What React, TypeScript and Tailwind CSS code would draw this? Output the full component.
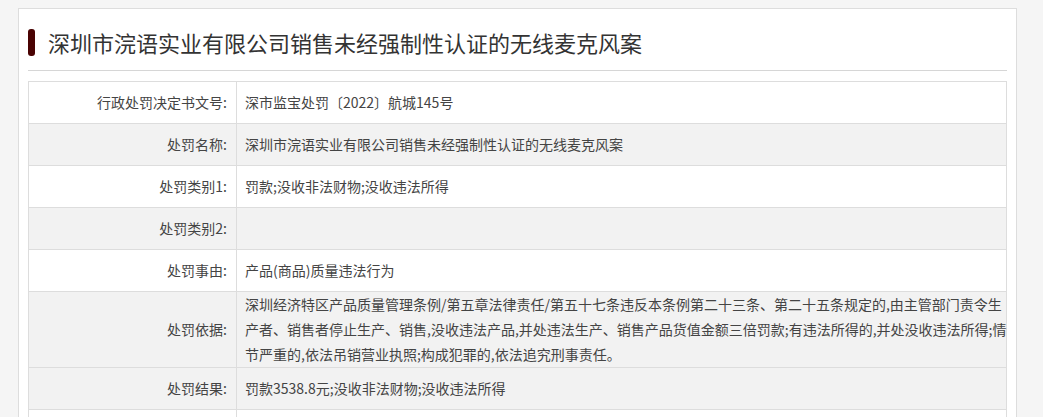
import React from 'react';

const font = { fontFamily: '"Noto Sans CJK SC", "Noto Sans", sans-serif' };

type Row = { label: string; value: React.ReactNode; gray?: boolean; tall?: boolean };

const rows: Row[] = [
  { label: '行政处罚决定书文号:', value: '深市监宝处罚〔2022〕航城145号' },
  { label: '处罚名称:', value: '深圳市浣语实业有限公司销售未经强制性认证的无线麦克风案', gray: true },
  { label: '处罚类别1:', value: '罚款;没收非法财物;没收违法所得' },
  { label: '处罚类别2:', value: '', gray: true },
  { label: '处罚事由:', value: '产品(商品)质量违法行为' },
  {
    label: '处罚依据:',
    gray: true,
    tall: true,
    value: (
      <>
        深圳经济特区产品质量管理条例/第五章法律责任/第五十七条违反本条例第二十三条、第二十五条规定的,由主管部门责令生
        <br />
        产者、销售者停止生产、销售,没收违法产品,并处违法生产、销售产品货值金额三倍罚款;有违法所得的,并处没收违法所得;情
        <br />
        节严重的,依法吊销营业执照;构成犯罪的,依法追究刑事责任。
      </>
    ),
  },
  { label: '处罚结果:', value: '罚款3538.8元;没收非法财物;没收违法所得', gray: true },
  { label: '', value: '' },
];

export default function App() {
  return (
    <div className="min-h-screen bg-[#f5f5f5] pt-2 pl-[18px] pr-[26px] overflow-hidden" style={font}>
      <div className="bg-white border border-[#dddddd] px-[9px] pb-6 h-[420px]">
        {/* title */}
        <div className="flex items-center gap-[13px] h-[62px] pt-[5px] border-b border-[#d6d6d6]">
          <span className="w-[7px] h-[27px] rounded-[3px] bg-[#4a0303]" />
          <h1 className="text-[22px] text-[#333333] leading-none">
            深圳市浣语实业有限公司销售未经强制性认证的无线麦克风案
          </h1>
        </div>

        {/* detail table */}
        <div className="mt-[10px] border-t border-l border-r border-[#dddddd] text-[14px] text-[#444444]">
          {rows.map((r, i) => (
            <div
              key={i}
              className={`flex border-b border-[#dddddd] ${r.gray ? 'bg-[#f2f2f2]' : 'bg-white'} ${r.tall ? 'h-[76px]' : 'h-[42px]'}`}
            >
              <div className="w-[208px] shrink-0 border-r border-[#dddddd] flex items-center justify-end pr-[9px]">
                {r.label}
              </div>
              <div className="flex-1 flex items-center pl-[8px] leading-[25px] whitespace-nowrap">
                <div>{r.value}</div>
              </div>
            </div>
          ))}
        </div>
      </div>
    </div>
  );
}
